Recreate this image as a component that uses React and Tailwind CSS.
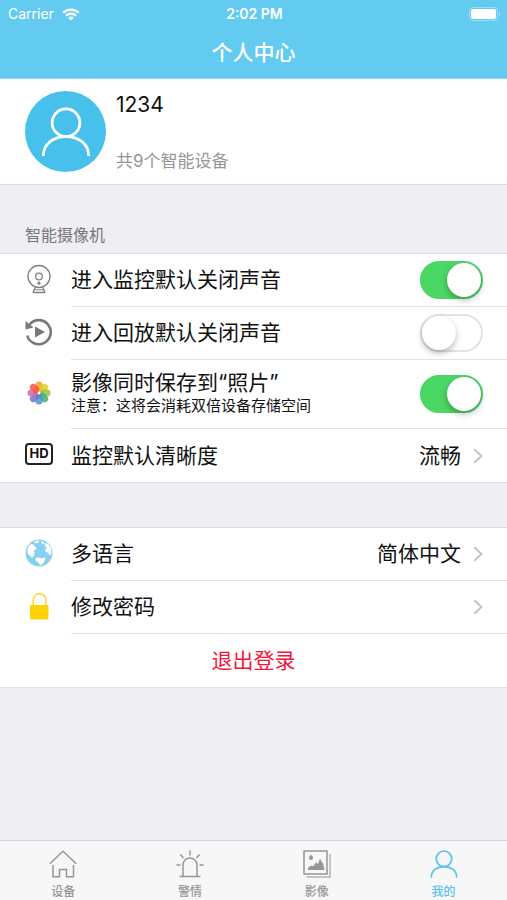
import React from "react";

function PersonIcon({ className, strokeWidth }) {
  return (
    <svg viewBox="0 0 54 54" fill="none" stroke="currentColor" strokeWidth={strokeWidth} className={className} aria-hidden="true">
      <circle cx="27" cy="17" r="15" />
      <path d="M2.5 53C2.5 39.500 13.500 32 27 32S51.500 39.500 51.500 53" />
    </svg>
  );
}

function WifiIcon() {
  return (
    <svg viewBox="0 0 18 13" className="h-[13px] w-[18px]" fill="none" stroke="white" strokeWidth="2.300" aria-hidden="true">
      <path d="M1.200 4.600C5.700.5 12.300.5 16.800 4.600" />
      <path d="M4 7.700C7 5 11 5 14 7.700" />
      <path d="M9 12.500 6.200 9.700C7.800 8.200 10.200 8.200 11.800 9.700Z" fill="white" stroke="none" />
    </svg>
  );
}

function BatteryIcon() {
  return (
    <svg viewBox="0 0 32 14" className="h-[14px] w-8" aria-hidden="true">
      <rect x=".5" y=".5" width="28" height="13" rx="3.500" fill="none" stroke="white" strokeOpacity=".35" />
      <rect x="2" y="2" width="25" height="10" rx="2" fill="white" />
      <path d="M30 5c1.800.6 1.800 3.400 0 4z" fill="white" fillOpacity=".5" />
    </svg>
  );
}

function CameraIcon() {
  return (
    <svg viewBox="0 0 28 30" className="h-[30px] w-7" fill="none" stroke="#808080" strokeWidth="1.300" aria-hidden="true">
      <circle cx="14" cy="12.500" r="11" />
      <circle cx="14" cy="12.500" r="3.300" />
      <circle cx="14" cy="19.200" r="1" fill="#808080" />
      <path d="M10.500 23 8.200 27.600Q8 28.500 9 28.500H19Q20 28.500 19.800 27.600L17.500 23" />
      <path d="M9 25.800H19" strokeWidth="1" />
    </svg>
  );
}

function ReplayIcon() {
  return (
    <svg viewBox="0 0 28 28" className="size-7" fill="none" aria-hidden="true">
      <path d="M4.500 6.500A12 12 0 1 1 2.200 17.500" stroke="#797979" strokeWidth="2.600" />
      <path d="M.5 3V11.500L8.500 9.500Z" fill="#797979" />
      <path d="M10 8.500V19.500L20 14Z" fill="#797979" />
    </svg>
  );
}

const PETALS = ["#fb9a2b", "#e3cf2e", "#96c83c", "#3fb070", "#4a93dc", "#7472c4", "#c76bb4", "#f4553f"];

function PhotosIcon() {
  return (
    <svg viewBox="0 0 24 24" className="size-6" aria-hidden="true">
      {PETALS.map((color, i) => (
        <rect
          key={color}
          x="8.500"
          y=".5"
          width="7"
          height="10.500"
          rx="3.500"
          fill={color}
          fillOpacity=".85"
          transform={`rotate(${i * 45} 12 12)`}
        />
      ))}
      <circle cx="12" cy="12" r="1.400" fill="white" />
    </svg>
  );
}

function HdIcon() {
  return (
    <span className="flex h-[22px] w-7 items-center justify-center rounded-[4px] border-2 border-[#222] text-[13px] leading-none font-bold text-[#111]">
      HD
    </span>
  );
}

function GlobeIcon() {
  return (
    <svg viewBox="0 0 28 28" className="size-7" aria-hidden="true">
      <circle cx="14" cy="14" r="13.500" fill="#86d1f0" />
      <g fill="white">
        <path d="M2.500 9 5 5.500 7.500 5 9.500 7 11.500 9 10 11 8.500 11.500 9.500 13.500 8.500 17.500 6.500 18.500 4.500 16 2.500 14.500Z" />
        <path d="M9 3 12 1.500 14.500 2 13 4 10.500 4.500Z" />
        <path d="M16 2.500 18.500 2.500 19.500 4.500 17.500 5.500Z" />
        <path d="M20.500 4 23 5 26 9 26.500 14 25 16.500 22.500 13.500 21 13 20 10.500 22 8.500 19.500 7Z" />
        <path d="M10.500 19 14 18.500 16 19.500 20.500 18.500 19.500 22.500 17 25.500 15 26 13 23 11 22Z" />
      </g>
    </svg>
  );
}

function LockIcon() {
  return (
    <svg viewBox="0 0 20 28" className="h-7 w-5" aria-hidden="true">
      <path d="M4.200 14V8.500C4.200-.8 16.800-.8 16.800 8.500V14" fill="none" stroke="#ffd93b" strokeWidth="1.700" />
      <rect x="1" y="13" width="18.500" height="14.500" rx=".8" fill="#ffd208" />
    </svg>
  );
}

function Chevron() {
  return (
    <svg viewBox="0 0 10 16" className="h-4 w-[10px] shrink-0" fill="none" stroke="#c4c4c8" strokeWidth="2" aria-hidden="true">
      <path d="M1.200 1.200 8.500 8 1.200 14.800" />
    </svg>
  );
}

function Row({ icon, last, tall, children }) {
  return (
    <li className="flex pl-[25px]">
      <span className="flex w-7 shrink-0 items-center justify-center pb-1">{icon}</span>
      <div className={`ml-[18px] flex min-w-0 flex-1 ${tall ? "h-[69px]" : "h-[53px]"} ${last ? "" : "border-b border-[#e2e2e5]"}`}>
        {children}
      </div>
    </li>
  );
}

function SwitchRow({ id, icon, label, note, on }) {
  return (
    <Row icon={icon} tall={Boolean(note)}>
      <div className="flex flex-1 items-center justify-between pr-6">
        <label htmlFor={id} className="flex flex-col">
          <span className="text-[21px] leading-6">{label}</span>
          {note && <span className="text-[15px] leading-[22px]">{note}</span>}
        </label>
        <input
          id={id}
          type="checkbox"
          role="switch"
          defaultChecked={on}
          className="flex h-[38px] w-[63px] shrink-0 cursor-pointer appearance-none items-center rounded-full border-2 border-[#e3e3e3] bg-white before:size-[34px] before:rounded-full before:bg-white before:shadow-[0_3px_6px_rgba(0,0,0,0.28)] before:content-[''] checked:justify-end checked:border-[#4bd763] checked:bg-[#4bd763]"
        />
      </div>
    </Row>
  );
}

function LinkRow({ icon, label, value, last }) {
  return (
    <Row icon={icon} last={last}>
      <button type="button" className="flex flex-1 items-center pr-6 text-left text-[21px] leading-6">
        <span className="flex-1">{label}</span>
        {value && <span>{value}</span>}
        <span className="ml-3 flex">
          <Chevron />
        </span>
      </button>
    </Row>
  );
}

function HomeIcon() {
  return (
    <svg viewBox="0 0 28 28" className="size-7" fill="none" stroke="currentColor" strokeWidth="1.500" aria-hidden="true">
      <path d="M.8 13.800 14 1.200 27.200 13.800" />
      <path d="M4 15V26.800H10.500V19.500H17.500V26.800H24.500V15" />
    </svg>
  );
}

function AlarmIcon() {
  return (
    <svg viewBox="0 0 28 28" className="size-7" fill="none" stroke="currentColor" strokeWidth="1.500" aria-hidden="true">
      <path d="M3.500 26.500H24.500M7 26V15C7 5.700 21 5.700 21 15V26" />
      <path d="M14 .5V5.500M4.500 4.500 7.500 8M23.500 4.500 20.500 8M.5 15H4.500M23.500 15H27.500" />
    </svg>
  );
}

function ImagesIcon() {
  return (
    <svg viewBox="0 0 28 28" className="size-7" fill="none" stroke="currentColor" strokeWidth="1.500" aria-hidden="true">
      <rect x="1" y="1" width="23" height="23" />
      <path d="M27 4V27H3.500" strokeOpacity=".7" />
      <ellipse cx="8" cy="7.500" rx="2" ry="2.500" fill="currentColor" stroke="none" />
      <path d="M5 20V18L8 15.500 10 16.500 13 12.500 15 14 17 8.500 19 12.500 20 13 21.500 20Z" fill="currentColor" stroke="none" />
    </svg>
  );
}

const TABS = [
  { label: "设备", icon: <HomeIcon /> },
  { label: "警情", icon: <AlarmIcon /> },
  { label: "影像", icon: <ImagesIcon /> },
  { label: "我的", icon: <PersonIcon className="size-7" strokeWidth={3.2} />, active: true },
];

export default function App() {
  return (
    <div className="flex min-h-screen flex-col bg-[#eeeef3] font-['Inter','Noto_Sans_CJK_SC',sans-serif] text-[#111]">
      <header className="border-b border-[#8fdbf4] bg-[#64cbf0] text-white">
        <div className="grid h-7 grid-cols-3 items-center pr-[6px] pl-2 text-[14px] leading-4">
          <div className="flex items-center gap-2">
            <span>Carrier</span>
            <WifiIcon />
          </div>
          <span className="text-center font-semibold">2:02 PM</span>
          <span className="flex justify-end">
            <BatteryIcon />
          </span>
        </div>
        <h1 className="flex h-[50px] items-center justify-center text-[21px] leading-6 font-medium">个人中心</h1>
      </header>

      <main>
        <section className="flex h-[106px] items-center gap-[10px] border-b border-[#dedee2] bg-white pl-[25px]">
          <div className="flex size-[81px] items-center justify-center rounded-full bg-[#47c1eb] text-white">
            <PersonIcon className="size-[50px]" strokeWidth={3} />
          </div>
          <div className="flex h-[81px] flex-col justify-between">
            <p className="text-[21px] leading-7">1234</p>
            <p className="text-[17px] leading-[22px] text-[#969696]">共9个智能设备</p>
          </div>
        </section>

        <h2 className="pt-[38px] pb-[6px] pl-[25px] text-[16px] leading-6 text-[#77777b]">智能摄像机</h2>
        <ul className="border-y border-[#dedee2] bg-white">
          <SwitchRow id="mute-live" icon={<CameraIcon />} label="进入监控默认关闭声音" on />
          <SwitchRow id="mute-replay" icon={<ReplayIcon />} label="进入回放默认关闭声音" />
          <SwitchRow
            id="save-photos"
            icon={<PhotosIcon />}
            label="影像同时保存到“照片”"
            note="注意：这将会消耗双倍设备存储空间"
            on
          />
          <LinkRow icon={<HdIcon />} label="监控默认清晰度" value="流畅" last />
        </ul>

        <ul className="mt-11 border-y border-[#dedee2] bg-white">
          <LinkRow icon={<GlobeIcon />} label="多语言" value="简体中文" />
          <LinkRow icon={<LockIcon />} label="修改密码" />
          <li>
            <button type="button" className="h-[53px] w-full text-center text-[21px] leading-6 text-[#f5153c]">
              退出登录
            </button>
          </li>
        </ul>
      </main>

      <nav className="mt-auto grid h-[60px] grid-cols-4 border-t border-[#d5d5d9] bg-[#f7f7f8]">
        {TABS.map((tab) => (
          <button
            key={tab.label}
            type="button"
            aria-current={tab.active ? "page" : undefined}
            className={`flex flex-col items-center gap-[6px] pt-[9px] text-[12px] leading-4 font-medium ${tab.active ? "text-[#58c3ea]" : "text-[#969696]"}`}
          >
            {tab.icon}
            <span>{tab.label}</span>
          </button>
        ))}
      </nav>
    </div>
  );
}
